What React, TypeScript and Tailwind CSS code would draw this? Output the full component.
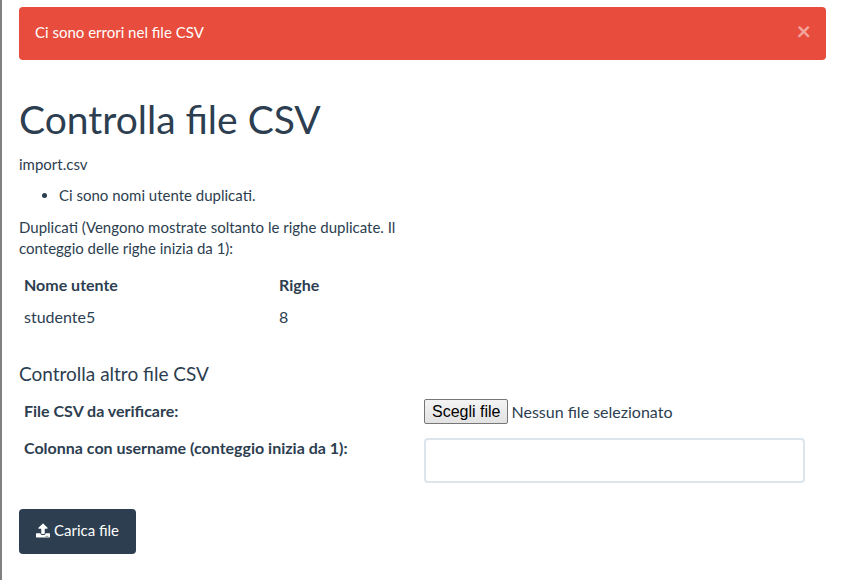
import { FaUpload } from "react-icons/fa";

export default function App() {
  return (
    <div className="h-[580px] overflow-hidden border-l-2 border-[#808080] bg-white pl-[17px] pr-[22px] pt-[7px] font-['Lato',sans-serif] text-[15px] leading-[21px] text-[#2c3e50]">
      {/* Alert */}
      <div className="flex h-[53px] items-center justify-between rounded bg-[#e74c3c] pb-[2px] pl-4 pr-[15px] text-white">
        <span>Ci sono errori nel file CSV</span>
        <span className="-mt-[5px] text-[25px] font-bold leading-none text-white/50">×</span>
      </div>

      <h1 className="mt-[38px] text-[39px] font-normal leading-[43px]">Controlla file CSV</h1>

      <p className="mt-[13px]">import.csv</p>
      <ul className="mt-[10px] list-disc pl-10">
        <li>Ci sono nomi utente duplicati.</li>
      </ul>

      <p className="mt-[11px] w-[390px]">
        Duplicati (Vengono mostrate soltanto le righe duplicate. Il conteggio delle righe inizia da 1):
      </p>

      {/* Table */}
      <table className="mt-[10px] w-[390px] table-fixed border-collapse text-[16px]">
        <tbody>
          <tr>
            <th className="w-[255px] p-[5px] text-left font-bold">Nome utente</th>
            <th className="p-[5px] text-left font-bold">Righe</th>
          </tr>
          <tr>
            <td className="p-[5px] pt-[6px]">studente5</td>
            <td className="p-[5px] pt-[6px]">8</td>
          </tr>
        </tbody>
      </table>

      <h4 className="mt-[31px] text-[19px] font-normal leading-[21px]">Controlla altro file CSV</h4>

      {/* Form */}
      <div className="mt-[15px] grid grid-cols-[405px_381px] gap-y-[14px] text-[16px]">
        <label className="pl-[5px] pt-[1px] font-bold">File CSV da verificare:</label>
        <div className="flex h-[25px] items-center gap-[3px]">
          <button className="h-[25px] rounded-[2px] border border-[#767676] bg-gradient-to-b from-[#f4f4f4] to-[#e2e2e2] px-[7px] font-['Liberation_Sans',sans-serif] text-[16px] leading-none text-black">
            Scegli file
          </button>
          <span className="text-[16px]">Nessun file selezionato</span>
        </div>
        <label className="-mt-px pl-[5px] font-bold">Colonna con username (conteggio inizia da 1):</label>
        <input className="h-[45px] w-[381px] rounded border-2 border-[#dce4ec] bg-white outline-none" />
      </div>

      <button className="mt-[26px] flex h-[45px] items-center gap-[4px] rounded bg-[#2c3e50] px-[17px] pb-[2px] text-[15px] text-white">
        <FaUpload className="h-[15px] w-[14px]" />
        Carica file
      </button>
    </div>
  );
}
